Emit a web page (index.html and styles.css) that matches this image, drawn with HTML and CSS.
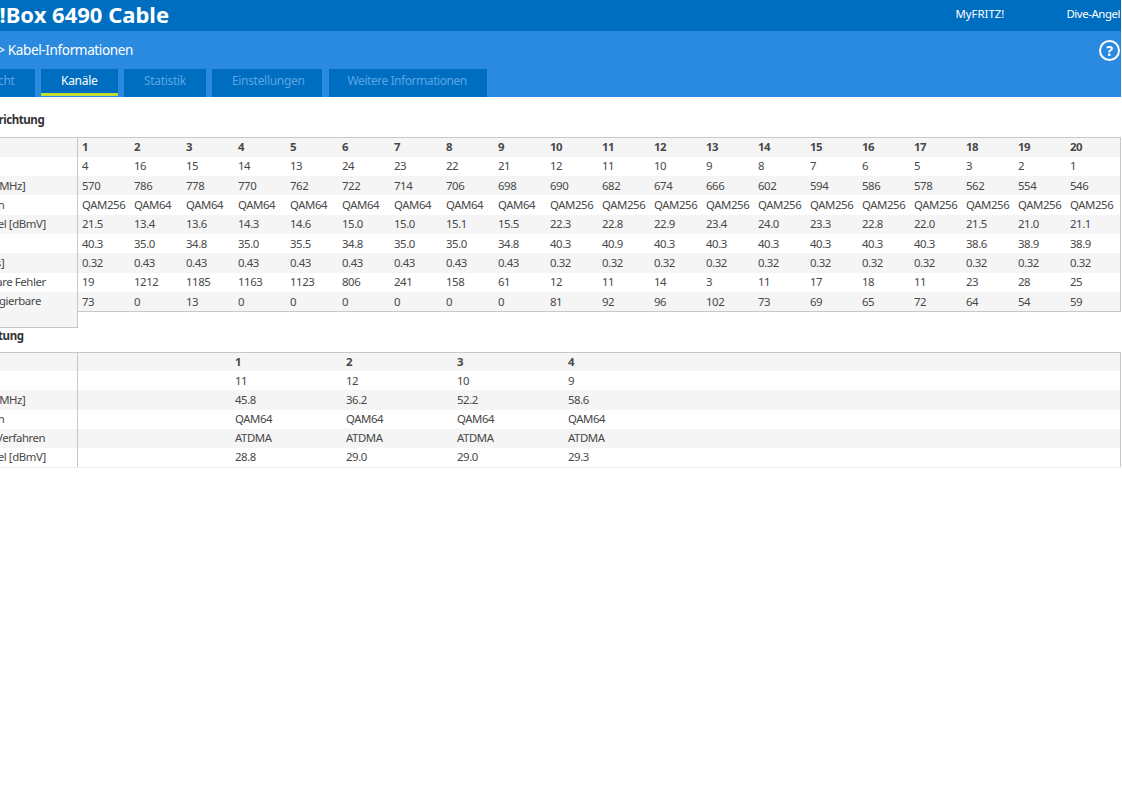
FILE: index.html
```html
<!DOCTYPE html>
<html lang="de">
<head>
    <meta charset="UTF-8">
    <meta name="viewport" content="width=device-width, initial-scale=1.0">
    <title>FRITZ!Box 6490 Cable - Kabel-Informationen</title>
    <link rel="stylesheet" href="styles.css">
</head>
<body>
    <div class="page">
        <header class="topBar">
            <span class="brand">FRITZ!Box 6490 Cable</span>
            <nav class="topLinks">
                <span class="myFritz">MyFRITZ!</span>
                <span>Dive-Angel</span>
            </nav>
        </header>
        <div class="subBar">
            <div class="crumbRow">
                <span class="crumb">Internet <span class="crumbArrow">&gt;</span> Kabel-Informationen</span>
                <span class="helpIcon">?</span>
            </div>
            <div class="tabs">
                <span class="tab">Übersicht</span>
                <span class="tab active">Kanäle</span>
                <span class="tab">Statistik</span>
                <span class="tab tabSettings">Einstellungen</span>
                <span class="tab tabLast">Weitere Informationen</span>
            </div>
        </div>

        <h3 class="sectionTitle">Empfangsrichtung</h3>
        <div class="channelBlock">
            <table class="labels">
                <tr><td>Kanal</td></tr>
                <tr><td>Kanal-ID</td></tr>
                <tr><td>Frequenz [MHz]</td></tr>
                <tr><td>Modulation</td></tr>
                <tr><td>Power Level [dBmV]</td></tr>
                <tr><td>MSE [dB]</td></tr>
                <tr><td>Latenz [ms]</td></tr>
                <tr><td>korrigierbare Fehler</td></tr>
                <tr><td class="wrapLabel">Nicht korrigierbare<br>Fehler</td></tr>
            </table>
            <table class="values down">
                <tr class="head"><td>1</td><td>2</td><td>3</td><td>4</td><td>5</td><td>6</td><td>7</td><td>8</td><td>9</td><td>10</td><td>11</td><td>12</td><td>13</td><td>14</td><td>15</td><td>16</td><td>17</td><td>18</td><td>19</td><td>20</td></tr>
                <tr><td>4</td><td>16</td><td>15</td><td>14</td><td>13</td><td>24</td><td>23</td><td>22</td><td>21</td><td>12</td><td>11</td><td>10</td><td>9</td><td>8</td><td>7</td><td>6</td><td>5</td><td>3</td><td>2</td><td>1</td></tr>
                <tr><td>570</td><td>786</td><td>778</td><td>770</td><td>762</td><td>722</td><td>714</td><td>706</td><td>698</td><td>690</td><td>682</td><td>674</td><td>666</td><td>602</td><td>594</td><td>586</td><td>578</td><td>562</td><td>554</td><td>546</td></tr>
                <tr><td>QAM256</td><td>QAM64</td><td>QAM64</td><td>QAM64</td><td>QAM64</td><td>QAM64</td><td>QAM64</td><td>QAM64</td><td>QAM64</td><td>QAM256</td><td>QAM256</td><td>QAM256</td><td>QAM256</td><td>QAM256</td><td>QAM256</td><td>QAM256</td><td>QAM256</td><td>QAM256</td><td>QAM256</td><td>QAM256</td></tr>
                <tr><td>21.5</td><td>13.4</td><td>13.6</td><td>14.3</td><td>14.6</td><td>15.0</td><td>15.0</td><td>15.1</td><td>15.5</td><td>22.3</td><td>22.8</td><td>22.9</td><td>23.4</td><td>24.0</td><td>23.3</td><td>22.8</td><td>22.0</td><td>21.5</td><td>21.0</td><td>21.1</td></tr>
                <tr><td>40.3</td><td>35.0</td><td>34.8</td><td>35.0</td><td>35.5</td><td>34.8</td><td>35.0</td><td>35.0</td><td>34.8</td><td>40.3</td><td>40.9</td><td>40.3</td><td>40.3</td><td>40.3</td><td>40.3</td><td>40.3</td><td>40.3</td><td>38.6</td><td>38.9</td><td>38.9</td></tr>
                <tr><td>0.32</td><td>0.43</td><td>0.43</td><td>0.43</td><td>0.43</td><td>0.43</td><td>0.43</td><td>0.43</td><td>0.43</td><td>0.32</td><td>0.32</td><td>0.32</td><td>0.32</td><td>0.32</td><td>0.32</td><td>0.32</td><td>0.32</td><td>0.32</td><td>0.32</td><td>0.32</td></tr>
                <tr><td>19</td><td>1212</td><td>1185</td><td>1163</td><td>1123</td><td>806</td><td>241</td><td>158</td><td>61</td><td>12</td><td>11</td><td>14</td><td>3</td><td>11</td><td>17</td><td>18</td><td>11</td><td>23</td><td>28</td><td>25</td></tr>
                <tr><td>73</td><td>0</td><td>13</td><td>0</td><td>0</td><td>0</td><td>0</td><td>0</td><td>0</td><td>81</td><td>92</td><td>96</td><td>102</td><td>73</td><td>69</td><td>65</td><td>72</td><td>64</td><td>54</td><td>59</td></tr>
            </table>
        </div>

        <h3 class="sectionTitle second">Senderichtung</h3>
        <div class="channelBlock">
            <table class="labels labelsUp">
                <tr><td>Kanal</td></tr>
                <tr><td>Kanal-ID</td></tr>
                <tr><td>Frequenz [MHz]</td></tr>
                <tr><td>Modulation</td></tr>
                <tr><td>Multiplex-Verfahren</td></tr>
                <tr><td>Power Level [dBmV]</td></tr>
            </table>
            <table class="values up">
                <tr class="head"><td></td><td>1</td><td>2</td><td>3</td><td>4</td><td></td></tr>
                <tr><td></td><td>11</td><td>12</td><td>10</td><td>9</td><td></td></tr>
                <tr><td></td><td>45.8</td><td>36.2</td><td>52.2</td><td>58.6</td><td></td></tr>
                <tr><td></td><td>QAM64</td><td>QAM64</td><td>QAM64</td><td>QAM64</td><td></td></tr>
                <tr><td></td><td>ATDMA</td><td>ATDMA</td><td>ATDMA</td><td>ATDMA</td><td></td></tr>
                <tr><td></td><td>28.8</td><td>29.0</td><td>29.0</td><td>29.3</td><td></td></tr>
            </table>
        </div>
    </div>
</body>
</html>
```

FILE: styles.css
```css
html, body {
    margin: 0;
    padding: 0;
    background-color: white;
    overflow: hidden;
}
.page {
    margin-left: -85px;
    width: 1206px;
    font-family: "Noto Sans", sans-serif;
    font-size: 11.4px;
    letter-spacing: -0.42px;
    color: #484848;
}
.topBar {
    display: flex;
    align-items: center;
    justify-content: space-between;
    box-sizing: border-box;
    height: 31px;
    padding: 0 1px 4px 0;
    background-color: #006ec0;
    color: white;
}
.brand {
    padding-left: 24px;
    font-size: 22px;
    font-weight: 700;
    letter-spacing: 0;
}
.topLinks {
    display: flex;
    gap: 62px;
}
.myFritz {
    letter-spacing: 0;
}
.subBar {
    height: 66px;
    background-color: #2a8ae0;
    color: white;
}
.crumbRow {
    display: flex;
    align-items: center;
    justify-content: space-between;
    height: 38px;
    padding-right: 1px;
}
.crumb {
    padding-left: 30px;
    font-size: 13.5px;
    letter-spacing: -0.35px;
}
.helpIcon {
    width: 17px;
    height: 17px;
    border: 2px solid white;
    border-radius: 50%;
    text-align: center;
    line-height: 17px;
    font-size: 14px;
    font-weight: 700;
    letter-spacing: 0;
}
.tabs {
    display: flex;
    gap: 6px;
    padding-left: 28px;
}
.tab {
    box-sizing: border-box;
    height: 28px;
    padding: 0 20px;
    background-color: #006ec0;
    color: #5aa5e6;
    line-height: 23px;
    font-size: 12px;
    letter-spacing: -0.3px;
}
.tab.active {
    height: 27px;
    padding: 0 20.5px;
    border-bottom: 3px solid #c3dc32;
    color: white;
}
.tabSettings {
    padding: 0 17px 0 20px;
}
.tabLast {
    margin-left: 1px;
    padding: 0 20px 0 19px;
    letter-spacing: -0.45px;
}
.sectionTitle {
    margin: 16px 0 10px 0;
    padding-left: 30px;
    height: 14px;
    line-height: 14px;
    font-size: 11.5px;
    font-weight: 700;
    color: #333;
}
.sectionTitle.second {
    margin-top: 1px;
    margin-bottom: 9px;
}
.channelBlock {
    display: flex;
    align-items: flex-start;
}
table {
    border-collapse: collapse;
    table-layout: fixed;
}
td {
    height: 19.33px;
    padding: 0 0 1px 4px;
    white-space: nowrap;
    box-sizing: border-box;
}
tr:nth-child(odd) {
    background-color: #f5f5f5;
}
.labels {
    width: 163px;
    border: 1px solid #c8c8c8;
    border-left: none;
}
.labels td {
    padding-left: 32px;
}
.labels .wrapLabel {
    height: 35px;
    vertical-align: top;
    line-height: 16px;
    padding-top: 1px;
}
.labelsUp {
    border-bottom-color: #eeeeee;
}
.labelsUp td {
    height: 19.17px;
}
.values {
    flex: 1;
    border-top: 1px solid #c8c8c8;
    border-bottom: 1px solid #c8c8c8;
    border-right: 1px solid #c8c8c8;
}
.values .head td {
    font-weight: 700;
}
.values.down td {
    width: 52px;
}
.values.down td:last-child {
    width: auto;
}
.values.up {
    border-bottom-color: #eeeeee;
}
.values.up td {
    width: 111px;
    height: 19.17px;
}
.values.up td:first-child {
    width: 153px;
}
.values.up td:last-child {
    width: auto;
}
```
